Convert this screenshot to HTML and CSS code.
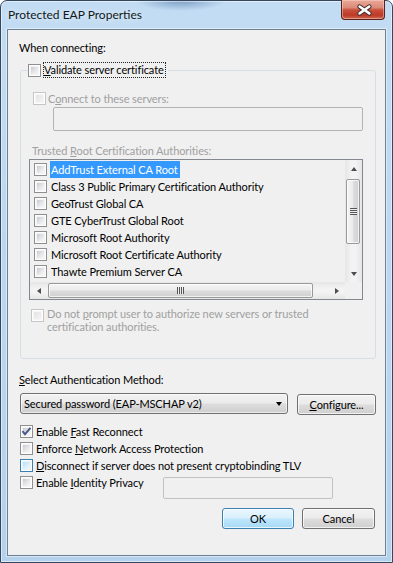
FILE: index.html
```html
<!DOCTYPE html>
<html lang="en">
<head>
<meta charset="utf-8">
<title>Protected EAP Properties</title>
<link rel="stylesheet" href="styles.css">
</head>
<body>
<div class="window">
  <div class="titlebar">
    <span class="title">Protected EAP Properties</span>
    <span class="close">
      <svg width="44" height="19" viewBox="0 0 44 19">
        <path d="M19 6.5 L29 13.5 M29 6.5 L19 13.5" stroke="#3b2b2b" stroke-width="4.6" stroke-linecap="round" fill="none"/>
        <path d="M19 6.5 L29 13.5 M29 6.5 L19 13.5" stroke="#ffffff" stroke-width="2.6" stroke-linecap="round" fill="none"/>
      </svg>
    </span>
  </div>
  <div class="client">
    <div class="label when">When connecting:</div>
    <fieldset class="group">
      <legend class="legend"><span class="cb"></span><span class="focus"><u>V</u>alidate server certificate</span></legend>
      <div class="row connect dis"><span class="cb cb-dis"></span><span>C<u>o</u>nnect to these servers:</span></div>
      <div class="edit servers"></div>
      <div class="label dis trusted">Trusted <u>R</u>oot Certification Authorities:</div>
      <div class="listbox">
        <div class="items">
          <div class="item"><span class="cb"></span><span class="it sel">AddTrust External CA Root</span></div>
          <div class="item"><span class="cb"></span><span class="it">Class 3 Public Primary Certification Authority</span></div>
          <div class="item"><span class="cb"></span><span class="it">GeoTrust Global CA</span></div>
          <div class="item"><span class="cb"></span><span class="it">GTE CyberTrust Global Root</span></div>
          <div class="item"><span class="cb"></span><span class="it">Microsoft Root Authority</span></div>
          <div class="item"><span class="cb"></span><span class="it">Microsoft Root Certificate Authority</span></div>
          <div class="item"><span class="cb"></span><span class="it">Thawte Premium Server CA</span></div>
        </div>
        <div class="vscroll">
          <div class="sbtn"><span class="arr up"></span></div>
          <div class="vtrack"><div class="vthumb"><span class="grip-h"></span></div></div>
          <div class="sbtn"><span class="arr down"></span></div>
        </div>
        <div class="hscroll">
          <div class="sbtn"><span class="arr left"></span></div>
          <div class="htrack"><div class="hthumb"><span class="grip-v"></span></div></div>
          <div class="sbtn"><span class="arr right"></span></div>
        </div>
        <div class="corner"></div>
      </div>
      <div class="row prompt dis"><span class="cb cb-dis"></span><span class="ptxt">Do not <u>p</u>rompt user to authorize new servers or trusted<br>certification authorities.</span></div>
    </fieldset>
    <div class="label select"><u>S</u>elect Authentication Method:</div>
    <div class="methodrow">
      <div class="combo"><span class="combotext">Secured password (EAP-MSCHAP v2)</span><span class="darr"></span></div>
      <div class="btn configure"><u>C</u>onfigure...</div>
    </div>
    <div class="checks">
      <div class="crow"><span class="cb cb-checked"><svg width="11" height="11" viewBox="0 0 11 11"><path d="M1.5 5.2 L4 8.2 L9.5 1.8" stroke="#4a5b8c" stroke-width="2" fill="none"/></svg></span><span>Enable <u>F</u>ast Reconnect</span></div>
      <div class="crow"><span class="cb"></span><span>Enforce <u>N</u>etwork Access Protection</span></div>
      <div class="crow"><span class="cb cb-hot"></span><span><u>D</u>isconnect if server does not present cryptobinding TLV</span></div>
      <div class="crow last"><div class="clabel"><span class="cb"></span><span>Enable <u>I</u>dentity Privacy</span></div><div class="edit identity"></div></div>
    </div>
    <div class="buttons">
      <div class="btn default">OK</div>
      <div class="btn cancel">Cancel</div>
    </div>
  </div>
</div>
</body>
</html>
```
FILE: styles.css
```css
* { box-sizing: border-box; }
html, body { margin: 0; padding: 0; }
body {
  width: 393px; height: 563px; overflow: hidden;
  font-family: Lato, "Noto Sans", sans-serif;
  font-size: 11px; letter-spacing: -0.1px; color: #000; background: #fff;
}
u { text-decoration: underline; text-underline-offset: 1px; }

.window {
  width: 393px; height: 563px;
  border: 1px solid #34465e;
  border-radius: 7px 7px 0 0;
  background:
    radial-gradient(ellipse 45px 10px at 180px 0px, rgba(70,110,160,0.55), rgba(70,110,160,0) 100%),
    linear-gradient(180deg, #c2dcf3 0%, #bcd8f1 40%, #b5d2ed 100%);
  box-shadow: inset 0 0 0 1px rgba(255,255,255,0.5);
  display: flex; flex-direction: column;
}
.titlebar {
  height: 28px; flex: none;
  display: flex; align-items: flex-start;
}
.title {
  margin: 6px 0 0 7px; line-height: 15px;
  font-size: 12px; letter-spacing: 0;
  color: #101820;
  text-shadow: 0 0 6px rgba(255,255,255,0.9);
}
.close {
  margin: -1px 7px 0 auto;
  width: 44px; height: 20px;
  border: 1px solid #5b2019; border-top: none;
  border-radius: 0 0 4px 4px;
  background: linear-gradient(180deg, #e9a999 0%, #dc8a78 40%, #c9503c 52%, #bb3a27 80%, #d06a52 100%);
  box-shadow: inset 0 0 0 1px rgba(255,220,210,0.45);
  display: flex; align-items: center; justify-content: center;
}
.close svg { display: block; margin: -1px 0 0 -1px; }

.client {
  flex: 1;
  margin: 0 6px 6px;
  border: 1px solid #6f7f94;
  background: #f0f0f0;
  box-shadow: 0 0 0 1px rgba(255,255,255,0.45);
}

.label { line-height: 15px; white-space: nowrap; }
.dis { color: #a0a0a0; }
.when { margin: 10px 0 0 11px; }

/* checkboxes */
.cb {
  flex: none; display: inline-block;
  width: 13px; height: 13px;
  border: 1px solid #8f8f8f;
  padding: 2px;
  background: linear-gradient(135deg, #c7cbd1 0%, #e8e9eb 60%, #f7f7f7 100%) content-box, #f4f4f4;
  box-shadow: inset 0 0 0 1px #fdfdfd;
}
.cb-dis {
  border-color: #c6c6c6;
  background: linear-gradient(135deg, #e4e4e4, #f3f3f3) content-box, #f6f6f6;
}
.cb-hot {
  border-color: #3c7fb1;
  background: linear-gradient(135deg, #b6defa 0%, #def0fd 60%, #ecf7fe 100%) content-box, #e7f4fd;
}
.cb-checked { padding: 0; background: linear-gradient(135deg, #c7cbd1 0%, #e8e9eb 60%, #f7f7f7 100%) 2px 2px / 7px 7px no-repeat, #f4f4f4; }
.cb-checked svg { display: block; }

/* group box */
.group {
  margin: 7px 0 0 12px;
  width: 356px;
  padding: 0 0 25px 12px;
  border: 1px solid #d5dfe5;
  border-radius: 3px;
  min-width: 0;
}
.legend {
  margin-left: -5px;
  padding: 0 2px 0 0;
  display: flex; align-items: center;
  height: 16px;
}
.legend .cb { margin-right: 2px; }
.focus {
  border: 1px dotted #222;
  line-height: 14px; height: 16px;
  padding: 0 1px 0 0;
  white-space: nowrap;
}

.row { display: flex; white-space: nowrap; }
.connect { margin-top: 13px; height: 15px; align-items: center; line-height: 15px; }
.connect .cb { margin-right: 2px; }

.edit {
  border: 1px solid #b3b3b3;
  background: #f0f0f0;
  border-radius: 2px;
}
.servers { margin: 1px 0 0 20px; width: 310px; height: 24px; }
.trusted { margin: 12px 0 0 -1px; }

/* list box */
.listbox {
  margin: 1px 0 0 -4px;
  width: 334px; height: 141px;
  border: 1px solid #828790;
  background: #f0f0f0;
  display: grid;
  grid-template-columns: 315px 17px;
  grid-template-rows: 122px 17px;
}
.items { padding: 1px 0 0 4px; overflow: hidden; }
.item { height: 17px; display: flex; align-items: center; white-space: nowrap; }
.item .cb { margin-right: 3px; }
.it { line-height: 17px; height: 17px; padding: 0 2px 0 1px; }
.sel { background: #3399ff; color: #fff; }

.vscroll {
  display: flex; flex-direction: column;
  background: linear-gradient(90deg, #e6e6e6, #f3f3f3 40%, #f3f3f3 60%, #e6e6e6);
}
.hscroll {
  display: flex;
  background: linear-gradient(180deg, #e6e6e6, #f3f3f3 40%, #f3f3f3 60%, #e6e6e6);
}
.corner { background: #f0f0f0; }
.sbtn { width: 17px; height: 17px; flex: none; display: flex; align-items: center; justify-content: center; }
.vtrack { flex: 1; padding: 2px 1px 0; }
.htrack { flex: 1; padding: 1px 0 0 1px; }
.vthumb {
  height: 65px; width: 14px;
  border: 1px solid #999; border-radius: 2px;
  background: linear-gradient(90deg, #f4f4f4 0%, #ececec 45%, #dcdcdc 55%, #d0d0d0 100%);
  box-shadow: inset 0 0 0 1px rgba(255,255,255,0.7);
  display: flex; align-items: center; justify-content: center;
}
.hthumb {
  width: 265px; height: 15px;
  border: 1px solid #999; border-radius: 2px;
  background: linear-gradient(180deg, #f4f4f4 0%, #ececec 45%, #dcdcdc 55%, #d0d0d0 100%);
  box-shadow: inset 0 0 0 1px rgba(255,255,255,0.7);
  display: flex; align-items: center; justify-content: center;
}
.grip-h {
  width: 7px; height: 7px;
  background: repeating-linear-gradient(180deg, #555 0 1px, #eee 1px 2px);
}
.grip-v {
  width: 7px; height: 7px;
  background: repeating-linear-gradient(90deg, #555 0 1px, #eee 1px 2px);
}
.arr { width: 0; height: 0; border: 0 solid transparent; }
.arr.up { border-width: 0 3.5px 4px; border-bottom-color: #4d4d4d; }
.arr.down { border-width: 4px 3.5px 0; border-top-color: #4d4d4d; }
.arr.left { border-width: 3.5px 4px 3.5px 0; border-right-color: #4d4d4d; }
.arr.right { border-width: 3.5px 0 3.5px 4px; border-left-color: #4d4d4d; }

.prompt { margin: 7px 0 0 -2px; align-items: flex-start; }
.prompt .cb { margin: 2px 3px 0 0; }
.ptxt { line-height: 13px; white-space: nowrap; }

/* bottom section */
.select { margin: 13px 0 0 11px; }
.methodrow { display: flex; align-items: flex-start; margin: 6px 0 0 12px; }
.combo {
  width: 268px; height: 21px;
  border: 1px solid #707070; border-radius: 3px;
  background: linear-gradient(180deg, #f2f2f2 0%, #ebebeb 48%, #dddddd 52%, #cfcfcf 100%);
  box-shadow: inset 0 0 0 1px rgba(255,255,255,0.6);
  display: flex; align-items: center;
  padding: 0 5px 0 3px;
}
.combotext { flex: 1; white-space: nowrap; line-height: 15px; }
.darr { width: 0; height: 0; border-style: solid; border-width: 4px 3.5px 0; border-color: #000 transparent transparent; }
.btn {
  height: 21px;
  border: 1px solid #707070; border-radius: 3px;
  background: linear-gradient(180deg, #f2f2f2 0%, #ebebeb 48%, #dddddd 52%, #cfcfcf 100%);
  box-shadow: inset 0 0 0 1px rgba(255,255,255,0.7);
  display: flex; align-items: center; justify-content: center;
  line-height: 15px; white-space: nowrap;
}
.configure { width: 79px; margin: 1px 0 0 9px; }

.checks { margin: 8px 0 0 12px; }
.crow { display: flex; align-items: center; height: 17px; white-space: nowrap; }
.crow .cb { margin-right: 3px; }
.crow.last { align-items: flex-start; height: auto; }
.clabel { width: 143px; height: 17px; display: flex; align-items: center; }
.identity { margin-top: 3px; width: 170px; height: 22px; border-color: #c2c2c2; }

.buttons { display: flex; justify-content: flex-end; gap: 8px; margin: 9px 10px 0 0; }
.default {
  width: 72px;
  border-color: #3c7fb1;
  background: linear-gradient(180deg, #eaf6fd 0%, #d9f0fc 48%, #bee6fd 52%, #a7d9f5 100%);
  box-shadow: inset 0 0 0 1px rgba(255,255,255,0.75);
}
.cancel { width: 73px; }
```
